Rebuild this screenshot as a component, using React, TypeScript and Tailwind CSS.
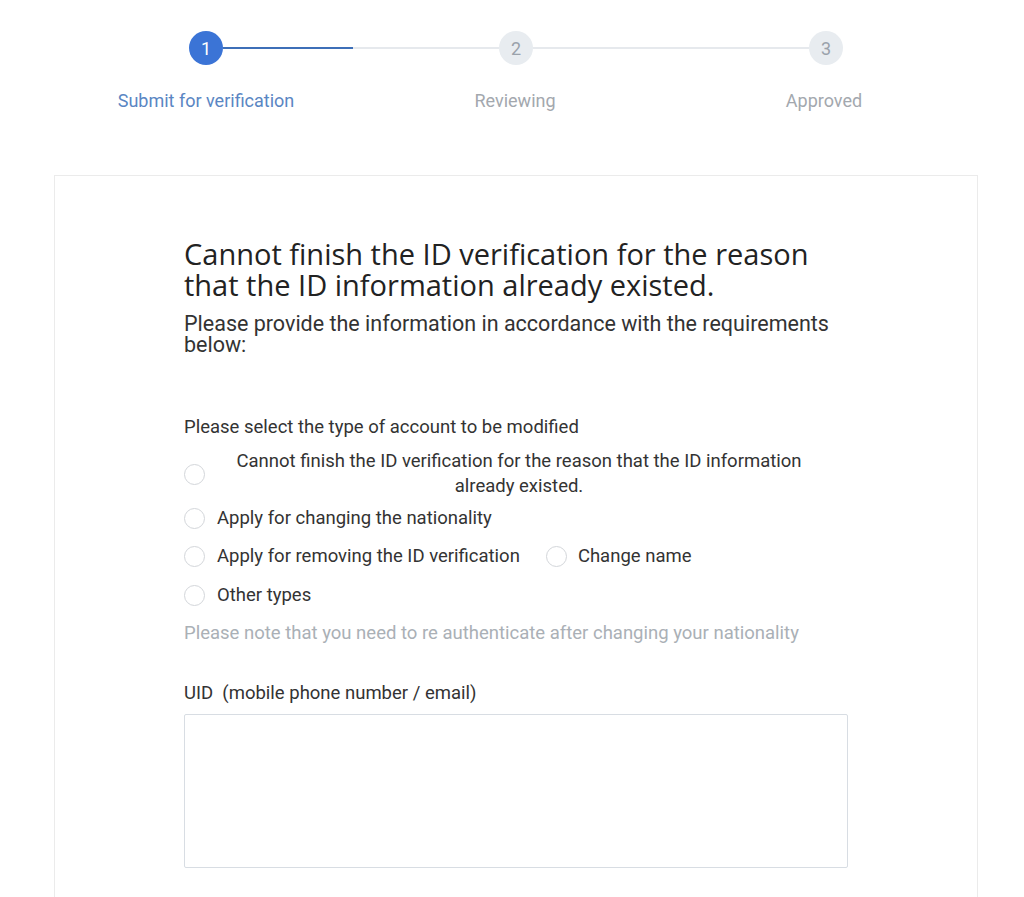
import React, { FC } from "react";

const font = { fontFamily: "Roboto, 'Liberation Sans', sans-serif" };

const Radio: FC = () => (
  <span className="inline-block w-[21px] h-[21px] rounded-full border border-[#d3d6da] bg-white shrink-0" />
);

const App: FC = () => {
  return (
    <div className="min-h-[897px] bg-white" style={font}>
      <div className="ml-[54px] w-[924px]">
        {/* Stepper */}
        <div className="pt-[31px]">
          <div className="flex items-center px-[135px]">
            <div className="w-[34px] h-[34px] rounded-full bg-[#3b74d6] text-white flex items-center justify-center text-[18px]">
              1
            </div>
            <div className="flex-1 flex h-[2px]">
              <div className="w-[130px] bg-[#3d6fb8]" />
              <div className="flex-1 bg-[#e6e9ed]" />
            </div>
            <div className="w-[34px] h-[34px] rounded-full bg-[#e8ecf0] text-[#9aa2ab] flex items-center justify-center text-[18px]">
              2
            </div>
            <div className="flex-1 h-[2px] bg-[#e6e9ed]" />
            <div className="w-[34px] h-[34px] rounded-full bg-[#e8ecf0] text-[#9aa2ab] flex items-center justify-center text-[18px]">
              3
            </div>
          </div>
          <div className="grid grid-cols-3 mt-[24px] text-[18px] leading-[24px] text-center">
            <div className="text-[#5a86c3] -ml-[4px]">Submit for verification</div>
            <div className="text-[#a3a8ae] -ml-[2px]">Reviewing</div>
            <div className="text-[#a3a8ae]">Approved</div>
          </div>
        </div>

        {/* Card */}
        <section className="mt-[62px] border border-[#ebebeb] bg-white pt-[62px] pb-[80px] pl-[129px]">
          <div className="w-[664px]">
            <h1 className="text-[29px] leading-[31px] text-[#222]" style={{ fontFamily: "'Open Sans', Roboto, sans-serif" }}>
              Cannot finish the ID verification for the reason that the ID information already existed.
            </h1>
            <p className="mt-[13px] text-[21.5px] leading-[21px] text-[#333]">
              Please provide the information in accordance with the requirements below:
            </p>

            <div className="mt-[60px] text-[18.5px] leading-[24px] text-[#333]">
              Please select the type of account to be modified
            </div>

            <div className="mt-[10px] flex flex-col text-[18.5px] leading-[25px] text-[#333]">
              <label className="flex items-center">
                <Radio />
                <span className="ml-[12px] w-[604px] text-center">
                  Cannot finish the ID verification for the reason that the ID information already existed.
                </span>
              </label>
              <label className="mt-[7px] flex items-center">
                <Radio />
                <span className="ml-[12px]">Apply for changing the nationality</span>
              </label>
              <div className="mt-[13px] flex items-center">
                <Radio />
                <span className="ml-[12px]">Apply for removing the ID verification</span>
                <span className="ml-[26px] flex">
                  <Radio />
                </span>
                <span className="ml-[11px]">Change name</span>
              </div>
              <label className="mt-[14px] flex items-center">
                <Radio />
                <span className="ml-[12px]">Other types</span>
              </label>
            </div>

            <p className="mt-[13px] text-[18.5px] leading-[25px] text-[#aab0b6]">
              Please note that you need to re authenticate after changing your nationality
            </p>

            <div className="mt-[35px] text-[18.5px] leading-[25px] text-[#333]">
              UID&nbsp;&nbsp;(mobile phone number / email)
            </div>
            <textarea className="mt-[8px] block w-[664px] h-[154px] border border-[#d8dde3] rounded-[2px] resize-none outline-none" />
          </div>
        </section>
      </div>
    </div>
  );
};

export default App;
